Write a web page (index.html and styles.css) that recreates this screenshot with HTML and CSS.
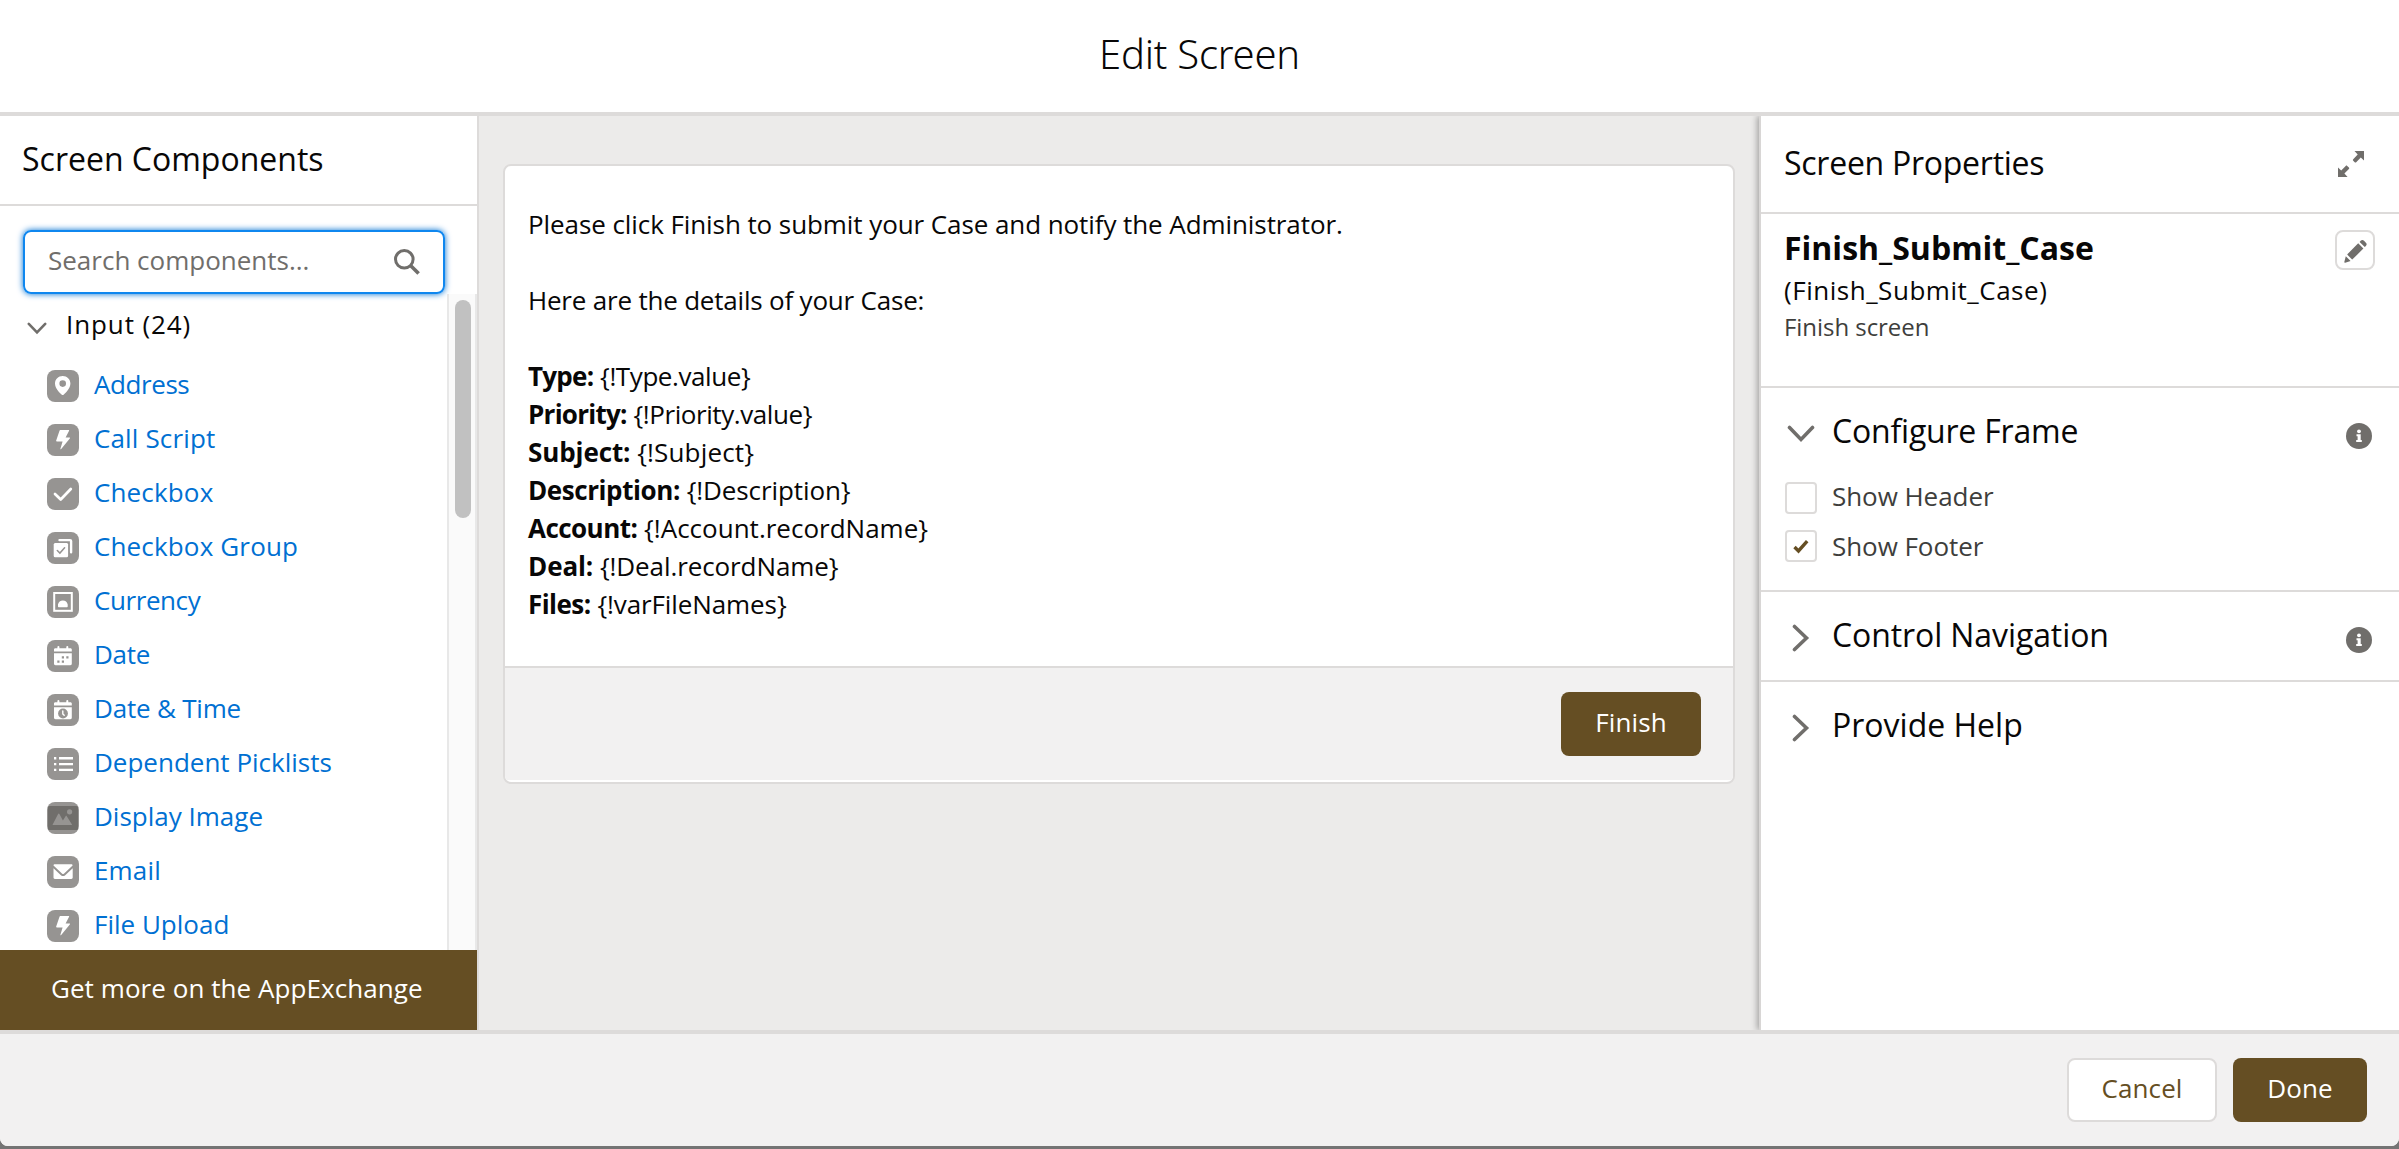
FILE: index.html
```html
<!DOCTYPE html>
<html lang="en">
<head>
<meta charset="utf-8">
<title>Edit Screen</title>
<link rel="stylesheet" href="styles.css">
</head>
<body>
<svg class="defs" aria-hidden="true">
  <symbol id="i-bolt" viewBox="0 0 32 32"><path fill="#fff" d="M13.4 6h8.2c.5 0 .7.4.5.8L18.600 13.400h3.800c.6 0 .8.600.4 1l-8.600 10.700c-.4.5-1 .2-.8-.4l2.200-7.300H9.800c-.6 0-.8-.4-.6-.9l3.300-9.800c.2-.5.4-.7.9-.7z"/></symbol>
  <symbol id="i-down" viewBox="0 0 28 18"><path d="M2.500 2.500 14 14.500 25.500 2.500" fill="none" stroke="#706e6b" stroke-width="3.600" stroke-linecap="round"/></symbol>
  <symbol id="i-right" viewBox="0 0 18 28"><path d="M2.500 2.500 14.500 14 2.500 25.500" fill="none" stroke="#706e6b" stroke-width="3.600" stroke-linecap="round"/></symbol>
  <symbol id="i-info" viewBox="0 0 26 26"><circle cx="13" cy="13" r="13" fill="#706e6b"/><circle cx="13" cy="8.300" r="1.900" fill="#fff"/><path fill="#fff" d="M10.500 11.200h4.200v5.800h1.100v2h-5.600v-2h1.400v-3.800h-1.100z"/></symbol>
</svg>
<div class="modal">
  <header class="modal-header"><h1>Edit Screen</h1></header>
  <main class="modal-body">
    <aside class="components">
      <h2 class="panel-title">Screen Components</h2>
      <div class="search">
        <span>Search components...</span>
        <svg width="26" height="26" viewBox="0 0 26 26" fill="none" stroke="#706e6b"><circle cx="10.300" cy="10.300" r="8.800" stroke-width="3"/><path d="M16.800 16.800 24.600 24.600" stroke-width="3.600"/></svg>
      </div>
      <div class="scroll">
        <div class="list">
          <div class="group"><svg width="20" height="13"><use href="#i-down"/></svg><span class="w-wide">Input (24)</span></div>
          <a class="item"><svg viewBox="0 0 32 32"><path fill="#fff" fill-rule="evenodd" d="M15.700 6C11.300 6 8 9.400 8 13.500c0 4.800 4.300 9 6.800 11.200.6.500 1.200.5 1.800 0 2.500-2.200 6.800-6.400 6.800-11.200C23.400 9.400 20 6 15.700 6zm0 4.300a3.300 3.300 0 1 1 0 6.600 3.300 3.300 0 0 1 0-6.600z"/></svg><span class="w-4">Address</span></a>
          <a class="item"><svg><use href="#i-bolt"/></svg><span class="w-up">Call Script</span></a>
          <a class="item"><svg viewBox="0 0 32 32"><path fill="none" stroke="#fff" stroke-width="2.700" stroke-linecap="round" stroke-linejoin="round" d="m8 16 5.700 5.500L23.800 11"/></svg><span class="w-up">Checkbox</span></a>
          <a class="item"><svg viewBox="0 0 32 32"><path fill="none" stroke="#fff" stroke-width="2.400" stroke-linecap="round" stroke-linejoin="round" d="M12.500 8.100h10.600a1 1 0 0 1 1 1v11.200"/><rect x="6.700" y="11" width="14.400" height="14.300" rx="1.500" fill="#fff"/><path d="m10.300 18.500 2.600 2.600 4.700-5.300" fill="none" stroke="#969492" stroke-width="1.500" stroke-linecap="round"/></svg><span class="w-up">Checkbox Group</span></a>
          <a class="item"><svg viewBox="0 0 32 32"><rect x="7.200" y="7" width="17.600" height="17.800" fill="none" stroke="#fff" stroke-width="2"/><path fill="#fff" d="M11 20.500v-2a5 5.200 0 0 1 9.700 0v2a.7.700 0 0 1-.7.700h-8.300a.7.700 0 0 1-.7-.7z"/></svg><span class="w-4">Currency</span></a>
          <a class="item"><svg viewBox="0 0 32 32"><path fill="#fff" d="M7 11.500V9.700c0-1 .5-1.500 1.400-1.500h2V7a1 1 0 0 1 2 0v1.200h6.900V7a1 1 0 0 1 2 0v1.200h2c1 0 1.500.5 1.500 1.500v1.800zM7 13.300h17.800v10.300c0 1-.5 1.600-1.500 1.600H8.500c-1 0-1.500-.6-1.500-1.600z"/><path fill="#969492" d="M14.800 16.200H17v2.200h-2.200zm4.500 0h2.200v2.200h-2.200zM10.300 20.600h2.200v2.200h-2.200zm4.500 0H17v2.200h-2.200z"/></svg><span class="w-3">Date</span></a>
          <a class="item"><svg viewBox="0 0 32 32"><path fill="#fff" d="M7 11.500V9.700c0-1 .5-1.500 1.400-1.500h2V7a1 1 0 0 1 2 0v1.200h6.900V7a1 1 0 0 1 2 0v1.200h2c1 0 1.500.5 1.500 1.500v1.800zM7 13.300h17.800v10.300c0 1-.5 1.600-1.500 1.600H8.500c-1 0-1.500-.6-1.500-1.600z"/><circle cx="16" cy="19.500" r="4.900" fill="#969492"/><path d="M15.800 17v2.900l1.400 1.400" fill="none" stroke="#fff" stroke-width="1.400" stroke-linecap="round"/></svg><span class="w-2">Date &amp; Time</span></a>
          <a class="item"><svg viewBox="0 0 32 32" fill="#fff"><path d="M7 9h2.300v2.400H7zM7 14.900h2.300v2.300H7zM7 20.700h2.300V23H7zM12 9h14v2.400H12zM12 14.900h14v2.300H12zM12 20.700h14V23H12z"/></svg><span>Dependent Picklists</span></a>
          <a class="item"><svg viewBox="0 0 32 32"><rect x="1" y="4" width="30" height="24" rx="1.500" fill="#706e6b"/><circle cx="22.600" cy="9.800" r="2.600" fill="#969492"/><path fill="#969492" d="m5.700 22.400 5.400-10.500c.4-.7.900-.7 1.300 0l3.500 6.600 2.700-4.300c.4-.6.800-.6 1.200 0l5 8c.3.500.1.900-.5.900H6.200c-.6 0-.8-.3-.5-.7z"/></svg><span>Display Image</span></a>
          <a class="item"><svg viewBox="0 0 32 32"><path fill="#fff" d="M6.500 9.600c0-.9.500-1.400 1.400-1.400h16.300c.9 0 1.400.5 1.400 1.400l-8.700 8.100c-.6.500-1.100.5-1.700 0zM6.500 12.200l7.400 7c1.500 1.200 2.900 1.200 4.300 0l7.500-7v9.400c0 .9-.5 1.400-1.400 1.400H7.900c-.9 0-1.400-.5-1.400-1.400z"/></svg><span class="w-up">Email</span></a>
          <a class="item"><svg><use href="#i-bolt"/></svg><span>File Upload</span></a>
        </div>
        <div class="track"><div class="thumb"></div></div>
      </div>
      <a class="exchange">Get more on the AppExchange</a>
    </aside>

    <section class="canvas">
      <div class="card">
        <div class="message">
          <p>Please click Finish to submit your Case and notify the Administrator.</p>
          <p>&nbsp;</p>
          <p class="w-2">Here are the details of your Case:</p>
          <p>&nbsp;</p>
          <p><b class="w-7">Type:</b> <span class="w-4">{!Type.value}</span></p>
          <p><b class="w-7">Priority:</b> <span class="w-4">{!Priority.value}</span></p>
          <p><b class="w-1">Subject:</b> <span class="w-up">{!Subject}</span></p>
          <p><b class="w-4">Description:</b> <span class="w-1">{!Description}</span></p>
          <p><b class="w-5">Account:</b> <span>{!Account.recordName}</span></p>
          <p><b class="w-1">Deal:</b> <span class="w-1">{!Deal.recordName}</span></p>
          <p><b class="w-5">Files:</b> <span class="w-1">{!varFileNames}</span></p>
        </div>
        <div class="card-footer"><button class="btn finish">Finish</button></div>
      </div>
    </section>

    <aside class="properties">
      <div class="prop-header">
        <h2 class="w-3">Screen Properties</h2>
        <svg width="26" height="26" viewBox="0 0 26 26" fill="#706e6b"><path d="M16.500 0H26v9.500l-3.200-2.900-4.600 4.600c-.5.500-1 .5-1.500 0l-1.500-1.500c-.5-.5-.5-1 0-1.500l4.500-4.600zM0 16.500l3.200 3 4.500-4.600c.5-.5 1-.5 1.500 0l1.700 1.600c.5.500.5 1 0 1.500l-4.500 4.600L9.600 26H0z"/></svg>
      </div>
      <div class="summary">
        <div>
          <h3>Finish_Submit_Case</h3>
          <div class="api">(Finish_Submit_Case)</div>
          <div class="kind">Finish screen</div>
        </div>
        <button class="edit"><svg width="23" height="23" viewBox="0 0 23 23" fill="#706e6b"><path d="m15.600 1.900 1.100-1.100c1-1 2.300-1 3.300 0l1.900 1.900c1 1 1 2.300 0 3.300l-1.100 1.100zM3.600 13.900 14.200 3.300l5.200 5.200L8.800 19.100c-.4.400-.8.400-1.200 0l-4-4c-.4-.4-.4-.8 0-1.200zM1.800 16.200l4.800 4.800-5.400 1.700c-.6.200-1-.2-.9-.8z"/></svg></button>
      </div>
      <section class="section">
        <div class="heading"><span class="chev"><svg width="28" height="18"><use href="#i-down"/></svg></span><h3 class="w-2">Configure Frame</h3><svg class="info"><use href="#i-info"/></svg></div>
        <div class="checks">
          <label class="check"><i class="box"></i><span>Show Header</span></label>
          <label class="check checked"><i class="box"><svg width="16" height="16" viewBox="0 0 16 16"><path d="m1.500 9 4 4L14.200 3.200" fill="none" stroke="#654e23" stroke-width="3.400"/></svg></i><span>Show Footer</span></label>
        </div>
      </section>
      <section class="section">
        <div class="heading"><span class="chev"><svg width="18" height="28"><use href="#i-right"/></svg></span><h3 class="w-1">Control Navigation</h3><svg class="info"><use href="#i-info"/></svg></div>
      </section>
      <section class="section last">
        <div class="heading"><span class="chev"><svg width="18" height="28"><use href="#i-right"/></svg></span><h3>Provide Help</h3></div>
      </section>
    </aside>
  </main>
  <footer class="modal-footer">
    <button class="btn cancel">Cancel</button>
    <button class="btn done">Done</button>
  </footer>
</div>
</body>
</html>
```
FILE: styles.css
```css
* { box-sizing: border-box; }
body {
  margin: 0;
  height: 1149px;
  overflow: hidden;
  background: #747474;
  color: #080707;
  font: 26px/38px "Open Sans", "Noto Sans", sans-serif;
}
h1, h2, h3, p { margin: 0; font-weight: 400; }
svg { display: block; flex: none; }
.defs { display: none; }

/* letter-spacing adjustments */
.w-1 { letter-spacing: -.1px; }
.w-2 { letter-spacing: -.2px; }
.w-3 { letter-spacing: -.26px; }
.w-4 { letter-spacing: -.42px; }
.w-5 { letter-spacing: -.54px; }
.w-7 { letter-spacing: -.75px; }
.w-up { letter-spacing: .15px; }
.w-wide { letter-spacing: .9px; }

.modal {
  display: flex;
  flex-direction: column;
  height: 1146px;
  background: #fff;
  border-radius: 0 0 8px 8px;
  overflow: hidden;
}
.modal-header {
  display: flex;
  align-items: center;
  justify-content: center;
  height: 116px;
  padding-bottom: 5px;
  border-bottom: 4px solid #dddbda;
}
.modal-header h1 { font: 300 40px/51px "Noto Sans", "Open Sans", sans-serif; letter-spacing: -.2px; }
.modal-body { display: flex; height: 914px; }

/* left panel */
.components {
  display: flex;
  flex-direction: column;
  width: 479px;
  border-right: 2px solid #dddbda;
}
.panel-title {
  height: 90px;
  padding: 21px 22px 0;
  border-bottom: 2px solid #dddbda;
  font-size: 32px;
  line-height: 43px;
  letter-spacing: 0;
}
.search {
  display: flex;
  align-items: center;
  justify-content: space-between;
  width: 422px;
  height: 64px;
  margin: 24px 0 0 23px;
  padding: 0 23px;
  border: 2px solid #0f87ef;
  border-radius: 8px;
  box-shadow: 0 0 6px #0070d2;
  color: #706e6b;
}
.search span { padding-bottom: 4px; }
.scroll { display: flex; flex: 1; min-height: 0; }
.list { flex: 1; overflow: hidden; }
.group {
  display: flex;
  align-items: center;
  gap: 19px;
  height: 65px;
  padding-left: 27px;
}
.group svg { margin-top: 3px; }
.group span { padding-bottom: 5px; }
.item {
  display: flex;
  align-items: center;
  gap: 15px;
  height: 54px;
  padding-left: 47px;
  color: #0070d2;
}
.item svg { width: 32px; height: 32px; background: #969492; border-radius: 8px; }
.item span { padding-bottom: 4px; }
.track {
  width: 30px;
  padding: 6px 0 0 6px;
  border: solid #e8e8e8;
  border-width: 0 2px;
  background: #fafafa;
}
.thumb { width: 16px; height: 218px; border-radius: 8px; background: #c1c1c1; }
.exchange {
  height: 80px;
  padding: 19px 0 0 51px;
  background: #654e23;
  color: #fff;
  letter-spacing: .06px;
  white-space: nowrap;
}

/* screen preview */
.canvas { flex: 1; padding: 48px 24px 0; background: #ecebea; }
.card {
  height: 620px;
  border: 2px solid #dddbda;
  border-radius: 8px;
  background: #fff;
  overflow: hidden;
}
.message {
  height: 500px;
  padding: 39px 22px 0 23px;
  font-size: 26px;
  line-height: 38px;
}
.message > p:first-child { letter-spacing: -.08px; }
.message b { font-weight: 700; }
.card-footer {
  display: flex;
  align-items: center;
  justify-content: flex-end;
  height: 114px;
  padding-right: 32px;
  border-top: 2px solid #dddbda;
  background: #f2f1f1;
}
.btn {
  height: 64px;
  padding: 0 0 4px;
  border: 0;
  border-radius: 8px;
  background: #654e23;
  color: #fff;
  font: inherit;
  letter-spacing: .12px;
}
.finish { width: 140px; }

/* right panel */
.properties {
  width: 640px;
  border-left: 2px solid #d8d6d5;
  background: #fff;
  box-shadow: -2px 0 6px rgba(0, 0, 0, .3);
  clip-path: inset(0 0 0 -12px);
}
.prop-header {
  display: flex;
  align-items: center;
  justify-content: space-between;
  height: 98px;
  padding: 0 35px 0 23px;
  border-bottom: 2px solid #dddbda;
}
.prop-header h2 { padding-bottom: 3px; font-size: 32px; line-height: 44px; }
.summary {
  display: flex;
  justify-content: space-between;
  height: 174px;
  padding: 13px 24px 0 23px;
  border-bottom: 2px solid #dddbda;
}
.summary h3 { font-size: 32px; line-height: 42px; font-weight: 700; }
.api { line-height: 42px; letter-spacing: .53px; }
.kind { font-size: 24px; line-height: 32px; color: #3e3e3c; letter-spacing: -.05px; }
.edit {
  display: flex;
  align-items: center;
  justify-content: center;
  width: 40px;
  height: 40px;
  margin-top: 3px;
  padding: 2px 0 0;
  border: 2px solid #dddbda;
  border-radius: 8px;
  background: #fff;
}
.section { border-bottom: 2px solid #dddbda; }
.section.last { border-bottom: 0; }
.heading {
  display: flex;
  align-items: center;
  height: 88px;
  padding: 0 27px 0 23px;
}
.chev { display: flex; justify-content: center; width: 34px; margin-right: 14px; padding-top: 4px; }
.heading h3 { flex: 1; padding-bottom: 3px; font-size: 32px; line-height: 44px; }
.info { width: 26px; height: 26px; margin-top: 8px; }
.checks { margin-top: -2px; padding-bottom: 20px; }
.check {
  display: flex;
  align-items: center;
  gap: 15px;
  height: 48px;
  padding-left: 24px;
  color: #3e3e3c;
  letter-spacing: -.05px;
}
.check span { padding-bottom: 5px; }
.checked span { padding-bottom: 1px; }
.box {
  display: flex;
  align-items: center;
  justify-content: center;
  width: 32px;
  height: 32px;
  border: 2px solid #dddbda;
  border-radius: 4px;
}

.modal-footer {
  display: flex;
  align-items: center;
  justify-content: flex-end;
  gap: 16px;
  height: 116px;
  padding: 0 32px 0 0;
  border-top: 4px solid #dddbda;
  background: #f2f1f1;
}
.cancel { width: 150px; border: 2px solid #dddbda; background: #fff; color: #654e23; }
.done { width: 134px; }
```
